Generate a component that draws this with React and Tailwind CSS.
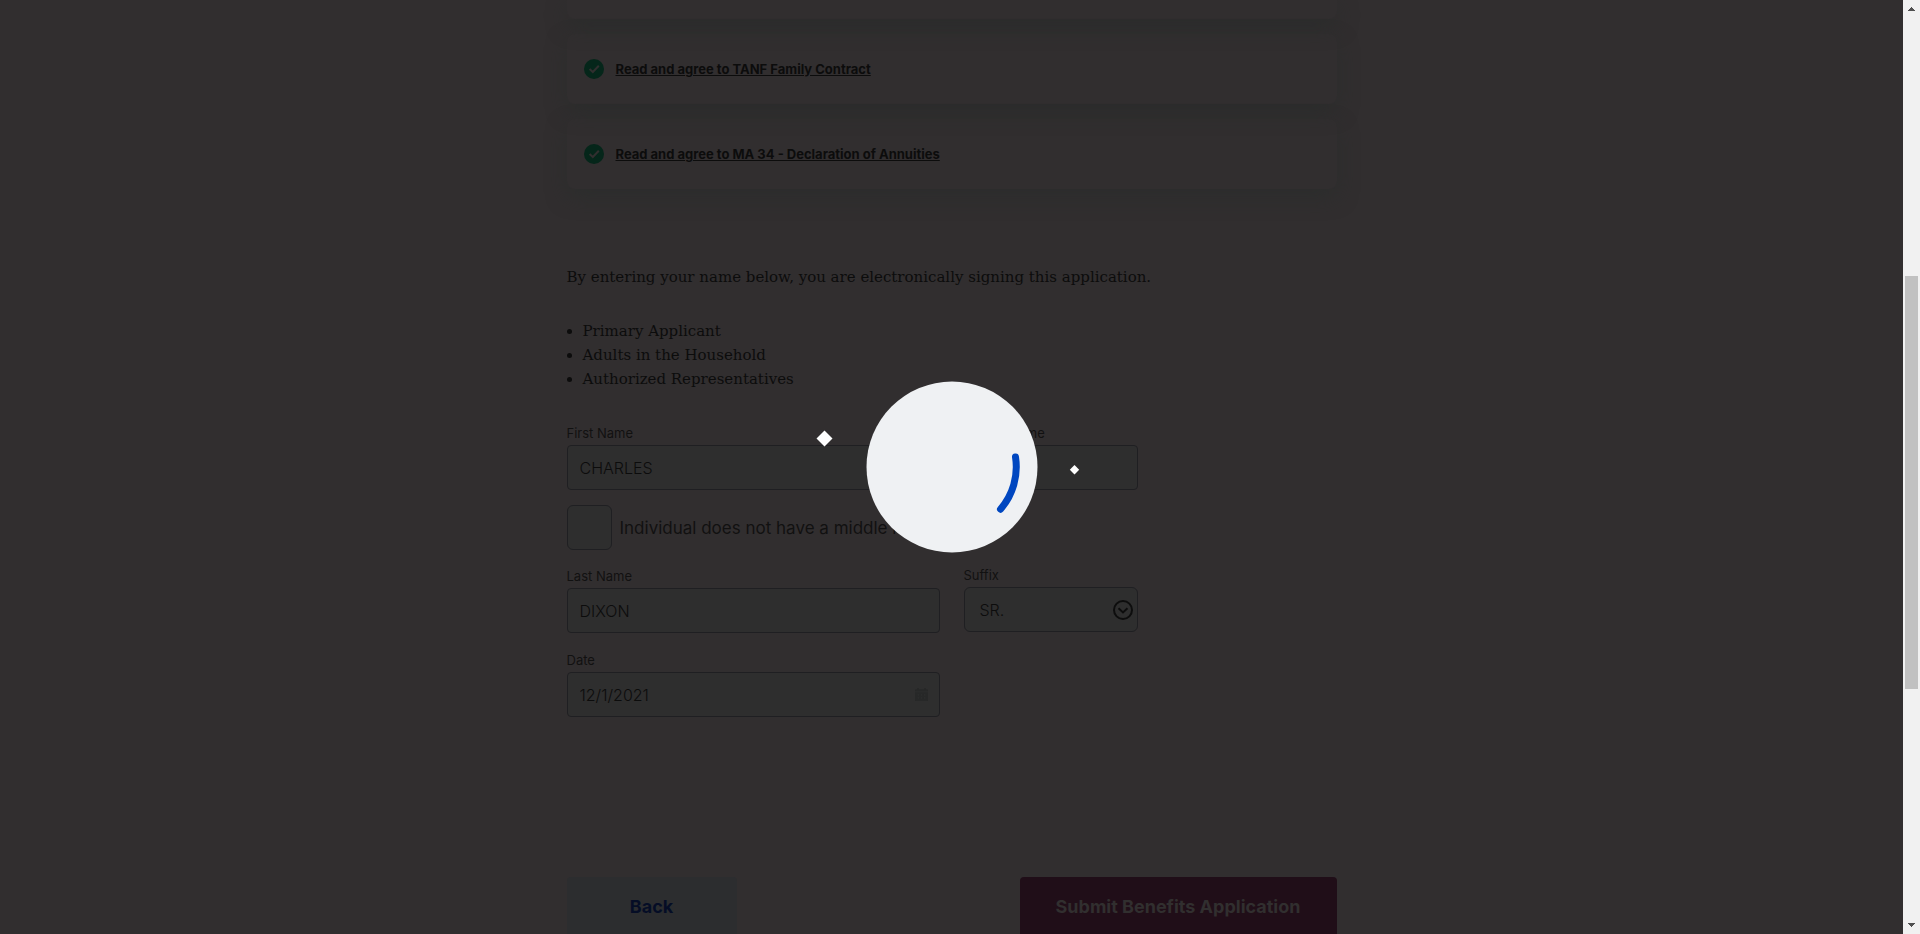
import React from "react";

const inputClass =
  "block h-[45px] w-full rounded border border-[#1f1f22] bg-[#2e2e2e] px-3 text-base font-light text-[#0c0c0c] outline-none";
const labelClass = "mb-0.5 block text-[13px] leading-5 text-[#111111]";

function CheckCircle() {
  return (
    <svg className="size-5 shrink-0" viewBox="0 0 20 20" fill="none" aria-hidden="true">
      <circle cx="10" cy="10" r="10" fill="#05261a" />
      <path d="M5.6 10.1 8.8 13 14.8 6.700" stroke="#312f2f" strokeWidth="2" />
    </svg>
  );
}

function AgreementCard({ children }) {
  return (
    <li className="flex h-[70px] items-center gap-3 rounded-lg px-[17px] shadow-[0_8px_20px_rgba(43,45,44,0.8)]">
      <CheckCircle />
      <a href="#" className="text-[13px] font-bold leading-5 text-[#0c0c0c] underline">
        {children}
      </a>
    </li>
  );
}

function CalendarIcon() {
  return (
    <svg className="size-[13px]" viewBox="0 0 12 12" aria-hidden="true">
      <path
        fill="#272828"
        fillRule="evenodd"
        d="M2 0h1.5v1.2h5V0H10v1.2h1.2q.8 0 .8.8v1.2H0V2q0-.8.8-.8H2zM0 4h12v7.2q0 .8-.8.8H.8Q0 12 0 11.200zM2.500 5.700v1.300h1.300V5.700zm2.900 0v1.300h1.300V5.700zm2.900 0v1.300h1.300V5.700zM2.500 8.500v1.300h1.300V8.500zm2.900 0v1.300h1.300V8.500zm2.900 0v1.300h1.300V8.500z"
      />
    </svg>
  );
}

function SelectArrow() {
  return (
    <svg className="size-5" viewBox="0 0 20 20" fill="none" stroke="#0d0d0d" strokeWidth="2" aria-hidden="true">
      <circle cx="10" cy="10" r="9" />
      <path d="M5.500 8.300 10 12.500l4.500-4.200" />
    </svg>
  );
}

function LoadingOverlay() {
  return (
    <div role="status" aria-label="Loading" className="absolute inset-0 flex items-center justify-center">
      <svg className="h-[180px] w-[300px]" viewBox="-150 -90 300 180" fill="none">
        <circle r="85.500" fill="#eff1f3" />
        <path d="M63.500-10A64.300 64.300 0 0 1 48.500 42.200" stroke="#0047c0" strokeWidth="7" strokeLinecap="round" />
        <path d="M-127.500-36.500l8 8-8 8-8-8z" fill="#fff" />
        <path d="M122.500-2l4.700 4.700-4.700 4.700-4.700-4.700z" fill="#fff" />
      </svg>
    </div>
  );
}

function ScrollRail() {
  return (
    <div aria-hidden="true" className="flex w-[17px] shrink-0 flex-col items-center justify-between bg-[#f1f1f1]">
      <svg className="h-[17px] w-[17px]" viewBox="0 0 17 17" shapeRendering="crispEdges">
        <path d="M5 11h7L8.500 7z" fill="#505050" />
      </svg>
      <div className="flex w-full grow flex-col px-0.5">
        <div className="grow-[259]" />
        <div className="grow-[413] bg-[#c1c1c1]" />
        <div className="grow-[228]" />
      </div>
      <svg className="h-[17px] w-[17px]" viewBox="0 0 17 17" shapeRendering="crispEdges">
        <path d="M5 6h7l-3.500 4z" fill="#505050" />
      </svg>
    </div>
  );
}

export default function App() {
  return (
    <div className="flex h-screen overflow-hidden bg-[#312e2f] font-['Inter','Open_Sans',sans-serif]">
      <div className="relative min-w-0 grow overflow-hidden">
        <main className="mx-auto w-full max-w-[770px]">
          <ul className="flex flex-col gap-[15px]">
            <li className="h-[19px] rounded-b-lg shadow-[0_8px_20px_rgba(43,45,44,0.8)]" />
            <AgreementCard>Read and agree to TANF Family Contract</AgreementCard>
            <AgreementCard>Read and agree to MA 34 - Declaration of Annuities</AgreementCard>
          </ul>

          <div className="mt-[76px] font-['DejaVu_Serif',serif] text-[15px] leading-6 text-[#0c0c0c]">
            <p>By entering your name below, you are electronically signing this application.</p>
            <ul className="mt-[30px] list-disc pl-4">
              <li>Primary Applicant</li>
              <li>Adults in the Household</li>
              <li>Authorized Representatives</li>
            </ul>
          </div>

          <form onSubmit={(e) => e.preventDefault()}>
            <div className="mt-8 grid max-w-[571px] grid-cols-[373fr_174fr] gap-x-6">
              <div>
                <label htmlFor="first" className={labelClass}>First Name</label>
                <input id="first" defaultValue="CHARLES" className={inputClass} />
              </div>
              <div>
                <label htmlFor="middle" className={labelClass}>Middle Name</label>
                <input id="middle" className={inputClass} />
              </div>

              <div className="col-span-2 mt-[15px] flex items-center gap-2">
                <input
                  id="nomiddle"
                  type="checkbox"
                  className="size-[45px] shrink-0 appearance-none rounded-md border border-[#1f1f22] bg-[#2e2e2e]"
                />
                <label htmlFor="nomiddle" className="text-[17px] leading-6 text-[#111111]">
                  Individual does not have a middle name
                </label>
              </div>

              <div className="mt-4">
                <label htmlFor="last" className={labelClass}>Last Name</label>
                <input id="last" defaultValue="DIXON" className={inputClass} />
              </div>
              <div className="mt-[15px]">
                <label htmlFor="suffix" className={labelClass}>Suffix</label>
                <div className="relative">
                  <select
                    id="suffix"
                    defaultValue="SR."
                    className="block h-[45px] w-full appearance-none rounded-md border border-[#1f1f22] bg-[#2e2e2e] px-[15px] text-base font-light text-[#0c0c0c]"
                  >
                    <option>SR.</option>
                    <option>JR.</option>
                  </select>
                  <span className="pointer-events-none absolute inset-y-0 right-[5px] flex items-center">
                    <SelectArrow />
                  </span>
                </div>
              </div>

              <div className="mt-[17px]">
                <label htmlFor="date" className={labelClass}>Date</label>
                <div className="relative">
                  <input id="date" defaultValue="12/1/2021" className={inputClass} />
                  <span className="pointer-events-none absolute inset-y-0 right-3 flex items-center">
                    <CalendarIcon />
                  </span>
                </div>
              </div>
            </div>

            <div className="mt-40 flex justify-between text-lg font-bold">
              <button type="button" className="h-[60px] w-[170px] rounded bg-[#2c2d2f] text-[#050d26]">
                Back
              </button>
              <button type="submit" className="h-[60px] w-[317px] rounded bg-[#200e18] text-[#312f2f]">
                Submit Benefits Application
              </button>
            </div>
          </form>
        </main>
        <LoadingOverlay />
      </div>
      <ScrollRail />
    </div>
  );
}
